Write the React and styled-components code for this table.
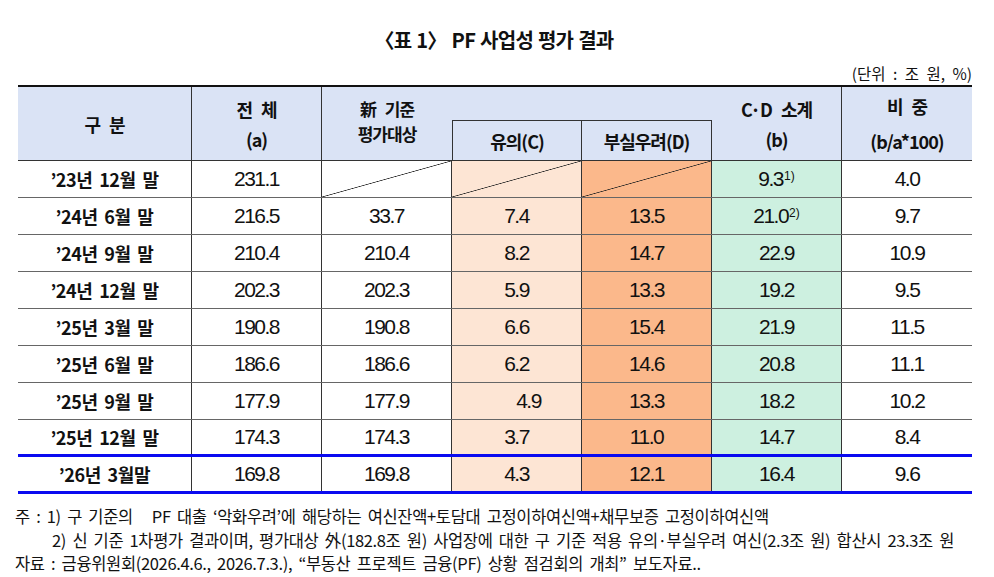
import React from "react";
import styled, { createGlobalStyle } from "styled-components";

const GlobalStyle = createGlobalStyle`
  body {
    margin: 0;
    background: #ffffff;
    color: #111111;
    font-family: "Noto Sans CJK KR", "Noto Sans", sans-serif;
  }
`;

const COLS = "174px repeat(6, 130px)";

const COLORS = {
  head: "#dae3f5",
  caution: "#fde5d4",
  risk: "#fbb88b",
  subtotal: "#cdf0e0",
};

const Page = styled.div`
  width: 994px;
  height: 577px;
  box-sizing: border-box;
  padding-top: 28px;
  overflow: hidden;
`;

const Title = styled.h1`
  margin: 0;
  text-align: center;
  font-size: 20px;
  line-height: 24px;
  font-weight: 700;
  letter-spacing: -0.7px;
  word-spacing: 1px;
  padding-right: 6px;
`;

const Unit = styled.div`
  margin: 12px 22px 0 0;
  text-align: right;
  font-size: 15.5px;
  line-height: 18px;
  word-spacing: 4px;
`;

const Table = styled.div`
  width: 954px;
  margin: 3px 0 0 18px;
`;

const Head = styled.div`
  display: grid;
  grid-template-columns: ${COLS};
  grid-template-rows: 33px 40px;
  background: ${COLORS.head};
  border-top: 2.5px solid #111111;
  border-bottom: 1px solid #333333;
`;

const HeadCell = styled.div`
  grid-column: ${(p) => p.$col};
  grid-row: ${(p) => p.$row};
  box-sizing: border-box;
  display: flex;
  flex-direction: column;
  align-items: center;
  justify-content: center;
  font-size: ${(p) => p.$fs || 18}px;
  font-weight: 700;
  letter-spacing: -1px;
  word-spacing: 6px;
  line-height: ${(p) => p.$lh || 30}px;
  padding-bottom: ${(p) => p.$pb || 0}px;
  border-right: ${(p) => (p.$noRight ? "none" : "1px solid #333333")};
  border-left: ${(p) => (p.$left ? "1px solid #333333" : "none")};
  border-top: ${(p) => (p.$top ? "1px solid #333333" : "none")};
`;

const Row = styled.div`
  display: grid;
  grid-template-columns: ${COLS};
  height: 37px;
  box-sizing: border-box;
  border-bottom: ${(p) => (p.$blue ? "3px solid #0a0af0" : "1px solid #666666")};
`;

const Cell = styled.div`
  display: flex;
  align-items: center;
  justify-content: center;
  box-sizing: border-box;
  padding-left: ${(p) => p.$shift || 0}px;
  background-color: ${(p) => p.$bg || "transparent"};
  background-image: ${(p) =>
    p.$slash
      ? "linear-gradient(to bottom right, transparent calc(50% - 0.7px), #222 50%, transparent calc(50% + 0.7px))"
      : "none"};
  border-right: ${(p) => (p.$last ? "none" : "1px solid #333333")};
  font-family: "Liberation Sans", Arial, sans-serif;
  font-size: 21px;
  letter-spacing: -1.5px;
`;

const Label = styled(Cell)`
  font-family: "Noto Sans CJK KR", "Noto Sans", sans-serif;
  font-size: 18px;
  font-weight: 700;
  letter-spacing: -0.4px;
  word-spacing: 3px;
`;

const Sup = styled.sup`
  font-size: 12px;
  letter-spacing: 0;
  line-height: 0;
  position: relative;
  top: -3px;
  margin-left: 1px;
`;

const Notes = styled.div`
  margin: 11px 0 0 15px;
  font-size: 16.5px;
  line-height: 23.5px;
  letter-spacing: -0.35px;
  word-spacing: 3px;
  white-space: pre;
`;

const NoteLine = styled.div`
  padding-left: ${(p) => p.$indent || 0}px;
`;

const rows = [
  ["’23년 12월 말", "231.1", null, null, null, ["9.3", "1)"], "4.0"],
  ["’24년 6월 말", "216.5", "33.7", "7.4", "13.5", ["21.0", "2)"], "9.7"],
  ["’24년 9월 말", "210.4", "210.4", "8.2", "14.7", "22.9", "10.9"],
  ["’24년 12월 말", "202.3", "202.3", "5.9", "13.3", "19.2", "9.5"],
  ["’25년 3월 말", "190.8", "190.8", "6.6", "15.4", "21.9", "11.5"],
  ["’25년 6월 말", "186.6", "186.6", "6.2", "14.6", "20.8", "11.1"],
  ["’25년 9월 말", "177.9", "177.9", "4.9", "13.3", "18.2", "10.2"],
  ["’25년 12월 말", "174.3", "174.3", "3.7", "11.0", "14.7", "8.4"],
  ["’26년 3월말", "169.8", "169.8", "4.3", "12.1", "16.4", "9.6"],
];

const Value = ({ v }) =>
  Array.isArray(v) ? (
    <>
      {v[0]}
      <Sup>{v[1]}</Sup>
    </>
  ) : (
    v
  );

export default function App() {
  return (
    <Page>
      <GlobalStyle />
      <Title>〈표 1〉 PF 사업성 평가 결과</Title>
      <Unit>(단위 : 조 원, %)</Unit>
      <Table>
        <Head>
          <HeadCell $col="1" $row="1 / 3">구 분</HeadCell>
          <HeadCell $col="2" $row="1 / 3">
            <span>전 체</span>
            <span>(a)</span>
          </HeadCell>
          <HeadCell $col="3" $row="1 / 3" $noRight $lh={25} $fs={17} $pb={6}>
            <span>新 기준</span>
            <span>평가대상</span>
          </HeadCell>
          <HeadCell $col="4 / 6" $row="1" $noRight />
          <HeadCell $col="4" $row="2" $left $top>유의(C)</HeadCell>
          <HeadCell $col="5" $row="2" $top>부실우려(D)</HeadCell>
          <HeadCell $col="6" $row="1 / 3">
            <span>C·D 소계</span>
            <span>(b)</span>
          </HeadCell>
          <HeadCell $col="7" $row="1 / 3" $noRight $lh={35}>
            <span>비 중</span>
            <span>(b/a*100)</span>
          </HeadCell>
        </Head>
        {rows.map((r, i) => (
          <Row key={r[0]} $blue={i >= rows.length - 2}>
            <Label>{r[0]}</Label>
            <Cell>{r[1]}</Cell>
            <Cell $slash={!r[2]}>{r[2]}</Cell>
            <Cell $bg={COLORS.caution} $slash={!r[3]} $shift={r[3] === "4.9" ? 24 : 0}>
              {r[3]}
            </Cell>
            <Cell $bg={COLORS.risk} $slash={!r[4]}>
              {r[4]}
            </Cell>
            <Cell $bg={COLORS.subtotal}>
              <Value v={r[5]} />
            </Cell>
            <Cell $last>{r[6]}</Cell>
          </Row>
        ))}
      </Table>
      <Notes>
        <NoteLine>
          {"주 : 1) 구 기준의   PF 대출 ‘악화우려’에 해당하는 여신잔액+토담대 고정이하여신액+채무보증 고정이하여신액"}
        </NoteLine>
        <NoteLine $indent={37}>
          {"2) 신 기준 1차평가 결과이며, 평가대상 外(182.8조 원) 사업장에 대한 구 기준 적용 유의·부실우려 여신(2.3조 원) 합산시 23.3조 원"}
        </NoteLine>
        <NoteLine>
          {"자료 : 금융위원회(2026.4.6., 2026.7.3.), “부동산 프로젝트 금융(PF) 상황 점검회의 개최” 보도자료.."}
        </NoteLine>
      </Notes>
    </Page>
  );
}
